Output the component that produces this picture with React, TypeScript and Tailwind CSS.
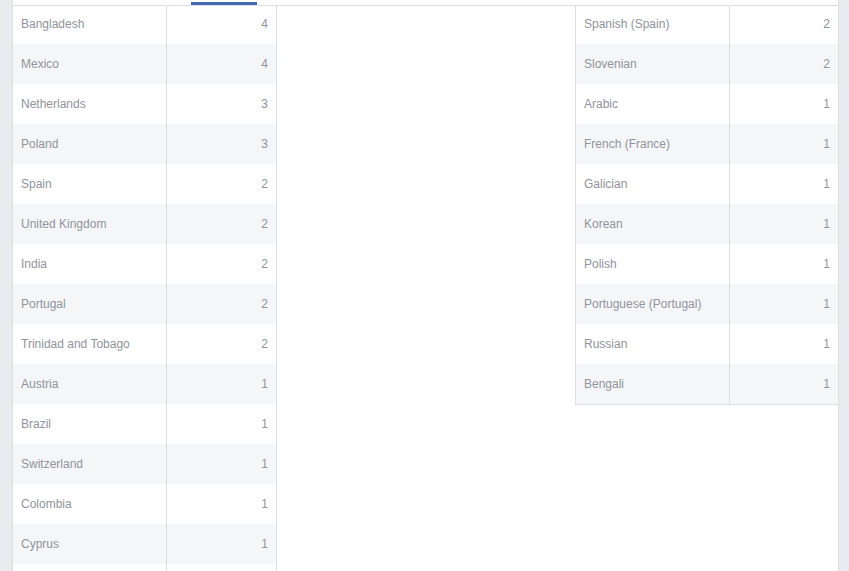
const countries: [string, number | null][] = [
  ["Bangladesh", 4],
  ["Mexico", 4],
  ["Netherlands", 3],
  ["Poland", 3],
  ["Spain", 2],
  ["United Kingdom", 2],
  ["India", 2],
  ["Portugal", 2],
  ["Trinidad and Tobago", 2],
  ["Austria", 1],
  ["Brazil", 1],
  ["Switzerland", 1],
  ["Colombia", 1],
  ["Cyprus", 1],
  ["", null],
];

const languages: [string, number | null][] = [
  ["Spanish (Spain)", 2],
  ["Slovenian", 2],
  ["Arabic", 1],
  ["French (France)", 1],
  ["Galician", 1],
  ["Korean", 1],
  ["Polish", 1],
  ["Portuguese (Portugal)", 1],
  ["Russian", 1],
  ["Bengali", 1],
];

const StatTable = ({ rows }: { rows: [string, number | null][] }) => (
  <div className="flex flex-col">
    {rows.map(([label, value], i) => (
      <div
        key={i}
        className={`flex h-10 shrink-0 ${i % 2 === 1 ? "bg-[#f5f6f7]" : "bg-white"}`}
      >
        <div className="flex w-[154px] items-center border-r border-[#dddfe2] pl-2">
          {label}
        </div>
        <div className="flex flex-1 items-center justify-end pr-2">{value}</div>
      </div>
    ))}
  </div>
);

const App = () => {
  return (
    <div
      className="flex h-[571px] w-[849px] overflow-hidden bg-[#e9ebee] text-[12px] text-[#90949c]"
      style={{ fontFamily: '"Liberation Sans", Arial, sans-serif' }}
    >
      <div className="w-[12px] shrink-0" />
      <div className="flex flex-1 flex-col border-x border-[#dddfe2] bg-white">
        <div className="flex h-[6px] shrink-0 items-start border-b border-[#dddfe2] pt-[2px]">
          <div className="ml-[178px] h-[3px] w-[66px] bg-[#4267b2]" />
        </div>
        <div className="flex flex-1 items-start overflow-hidden">
          <div className="-mt-[2px] w-[264px] shrink-0 border-r border-[#dddfe2]">
            <StatTable rows={countries} />
          </div>
          <div className="flex-1" />
          <div className="-mt-[2px] w-[263px] shrink-0 border-b border-l border-[#dddfe2]">
            <StatTable rows={languages} />
          </div>
        </div>
      </div>
      <div className="w-[10px] shrink-0" />
    </div>
  );
};

export default App;
